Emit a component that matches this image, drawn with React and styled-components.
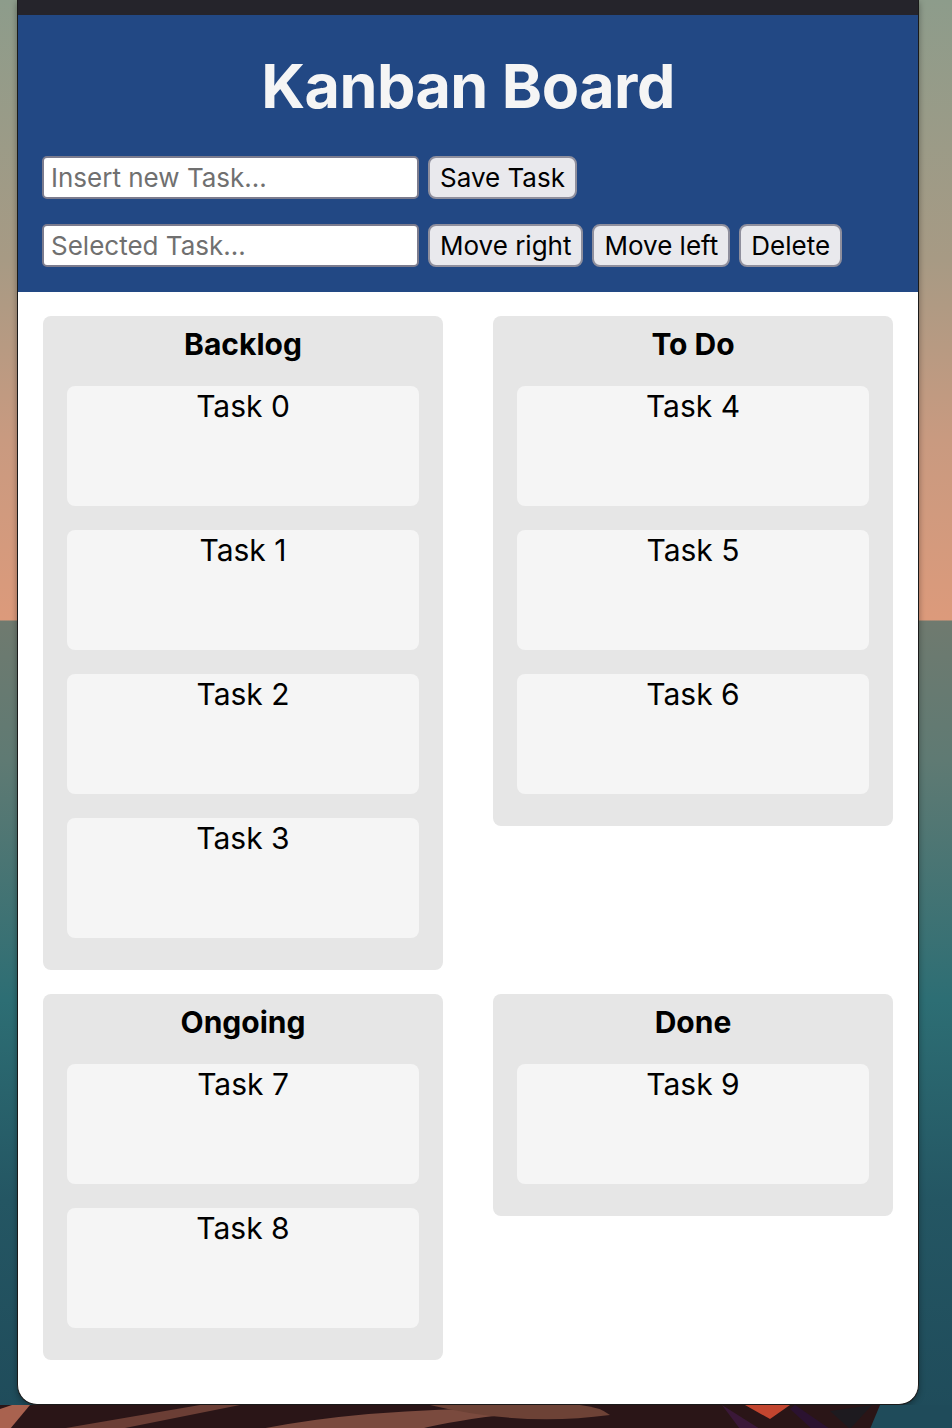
import React from 'react';
import styled, { createGlobalStyle } from 'styled-components';

const GlobalStyle = createGlobalStyle`
    html, body {
        margin: 0;
        padding: 0;
    }
    body {
        font-family: 'Inter', 'Noto Sans', sans-serif;
        background: #1f4f5d;
    }
`;

const Desktop = styled.div`
    display: flex;
    flex-direction: column;
    width: 952px;
    min-height: 1428px;
    background:
        linear-gradient(180deg, #8d9c8b 0px, #a79a84 260px, #c99a80 440px, #dc9a7b 620px, rgba(0, 0, 0, 0) 621px),
        linear-gradient(180deg, #1f4f5d 0px, #6f7a6f 622px, #5f7a73 760px, #2d6e74 1000px, #245663 1200px, #1f4b5a 1428px);
`;

const Window = styled.div`
    margin: 0 34px 0 17px;
    width: 900px;
    background: #ffffff;
    border: 1px solid #1a1a1a;
    border-top: none;
    border-radius: 0 0 20px 20px;
    overflow: hidden;
    box-shadow: 0 2px 6px rgba(0, 0, 0, 0.35);
`;

const TitleBar = styled.div`
    height: 15px;
    background: #25242b;
`;

const Header = styled.header`
    background: #224884;
    padding: 34px 24px 25px;
`;

const Title = styled.h1`
    margin: 0 0 33px;
    text-align: center;
    color: #f5f5f5;
    font-size: 61px;
    line-height: 74px;
    font-weight: 700;
    letter-spacing: -0.5px;
`;

const Controls = styled.div`
    display: flex;
    flex-direction: column;
    gap: 25px;
`;

const ControlRow = styled.div`
    display: flex;
    align-items: center;
    gap: 9px;
`;

const TextInput = styled.input`
    box-sizing: border-box;
    width: 377px;
    height: 43px;
    padding: 0 7px;
    font-family: inherit;
    font-size: 26px;
    color: #000;
    background: #fff;
    border: 2px solid #7c7c8e;
    border-radius: 5px;
    outline: none;
    &::placeholder {
        color: #707070;
    }
`;

const Button = styled.button`
    box-sizing: border-box;
    height: 43px;
    padding: 0 10px;
    font-family: inherit;
    font-size: 26px;
    color: #000;
    background: #e9e9ed;
    border: 2px solid #8f8f9d;
    border-radius: 8px;
    cursor: pointer;
`;

const Board = styled.main`
    display: grid;
    grid-template-columns: 400px 400px;
    column-gap: 50px;
    row-gap: 24px;
    align-items: start;
    padding: 24px 25px 44px;
`;

const Column = styled.section`
    background: #e6e6e6;
    border-radius: 8px;
    padding: 10px 24px 8px;
`;

const ColumnTitle = styled.h2`
    margin: 0 0 24px;
    text-align: center;
    font-size: 30px;
    line-height: 36px;
    font-weight: 700;
    color: #000;
`;

const Card = styled.div`
    height: 120px;
    margin-bottom: 24px;
    background: #f5f5f5;
    border-radius: 8px;
    text-align: center;
    font-size: 30px;
    line-height: 40px;
    color: #000;
`;

const Wallpaper = styled.div`
    height: 24px;
    line-height: 0;
`;

const columns = [
    { name: 'Backlog', tasks: ['Task 0', 'Task 1', 'Task 2', 'Task 3'] },
    { name: 'To Do', tasks: ['Task 4', 'Task 5', 'Task 6'] },
    { name: 'Ongoing', tasks: ['Task 7', 'Task 8'] },
    { name: 'Done', tasks: ['Task 9'] },
];

const App = () => {
    return (
        <Desktop>
            <GlobalStyle />
            <Window>
                <TitleBar />
                <Header>
                    <Title>Kanban Board</Title>
                    <Controls>
                        <ControlRow>
                            <TextInput type="text" placeholder="Insert new Task..." />
                            <Button>Save Task</Button>
                        </ControlRow>
                        <ControlRow>
                            <TextInput type="text" placeholder="Selected Task..." />
                            <Button>Move right</Button>
                            <Button>Move left</Button>
                            <Button>Delete</Button>
                        </ControlRow>
                    </Controls>
                </Header>
                <Board>
                    {columns.map((col) => (
                        <Column key={col.name}>
                            <ColumnTitle>{col.name}</ColumnTitle>
                            {col.tasks.map((task) => (
                                <Card key={task}>{task}</Card>
                            ))}
                        </Column>
                    ))}
                </Board>
            </Window>
            <Wallpaper>
                <svg width="952" height="24" viewBox="0 0 952 24">
                    <rect x="0" y="0" width="952" height="24" fill="#1f4b5a" />
                    <path d="M0 0 H880 L870 24 H0 Z" fill="#2a1517" />
                    <path d="M0 4 L12 0 H30 L10 24 H0 Z" fill="#a9624f" />
                    <path d="M60 24 L200 0 H240 L120 24 Z" fill="#6b3e35" />
                    <path d="M260 24 Q380 0 560 4 Q470 12 420 24 Z" fill="#7a4a3e" />
                    <path d="M430 0 Q520 22 610 10 Q600 2 580 0 Z" fill="#6d4236" />
                    <path d="M722 0 L760 24 H740 Z" fill="#3a1838" />
                    <path d="M745 0 L790 0 L770 14 Z" fill="#c2452f" />
                    <path d="M795 0 L830 24 H812 L790 4 Z" fill="#2b1230" />
                    <path d="M830 6 L872 0 L850 24 Z" fill="#1d1a1f" />
                </svg>
            </Wallpaper>
        </Desktop>
    );
};

export default App;
